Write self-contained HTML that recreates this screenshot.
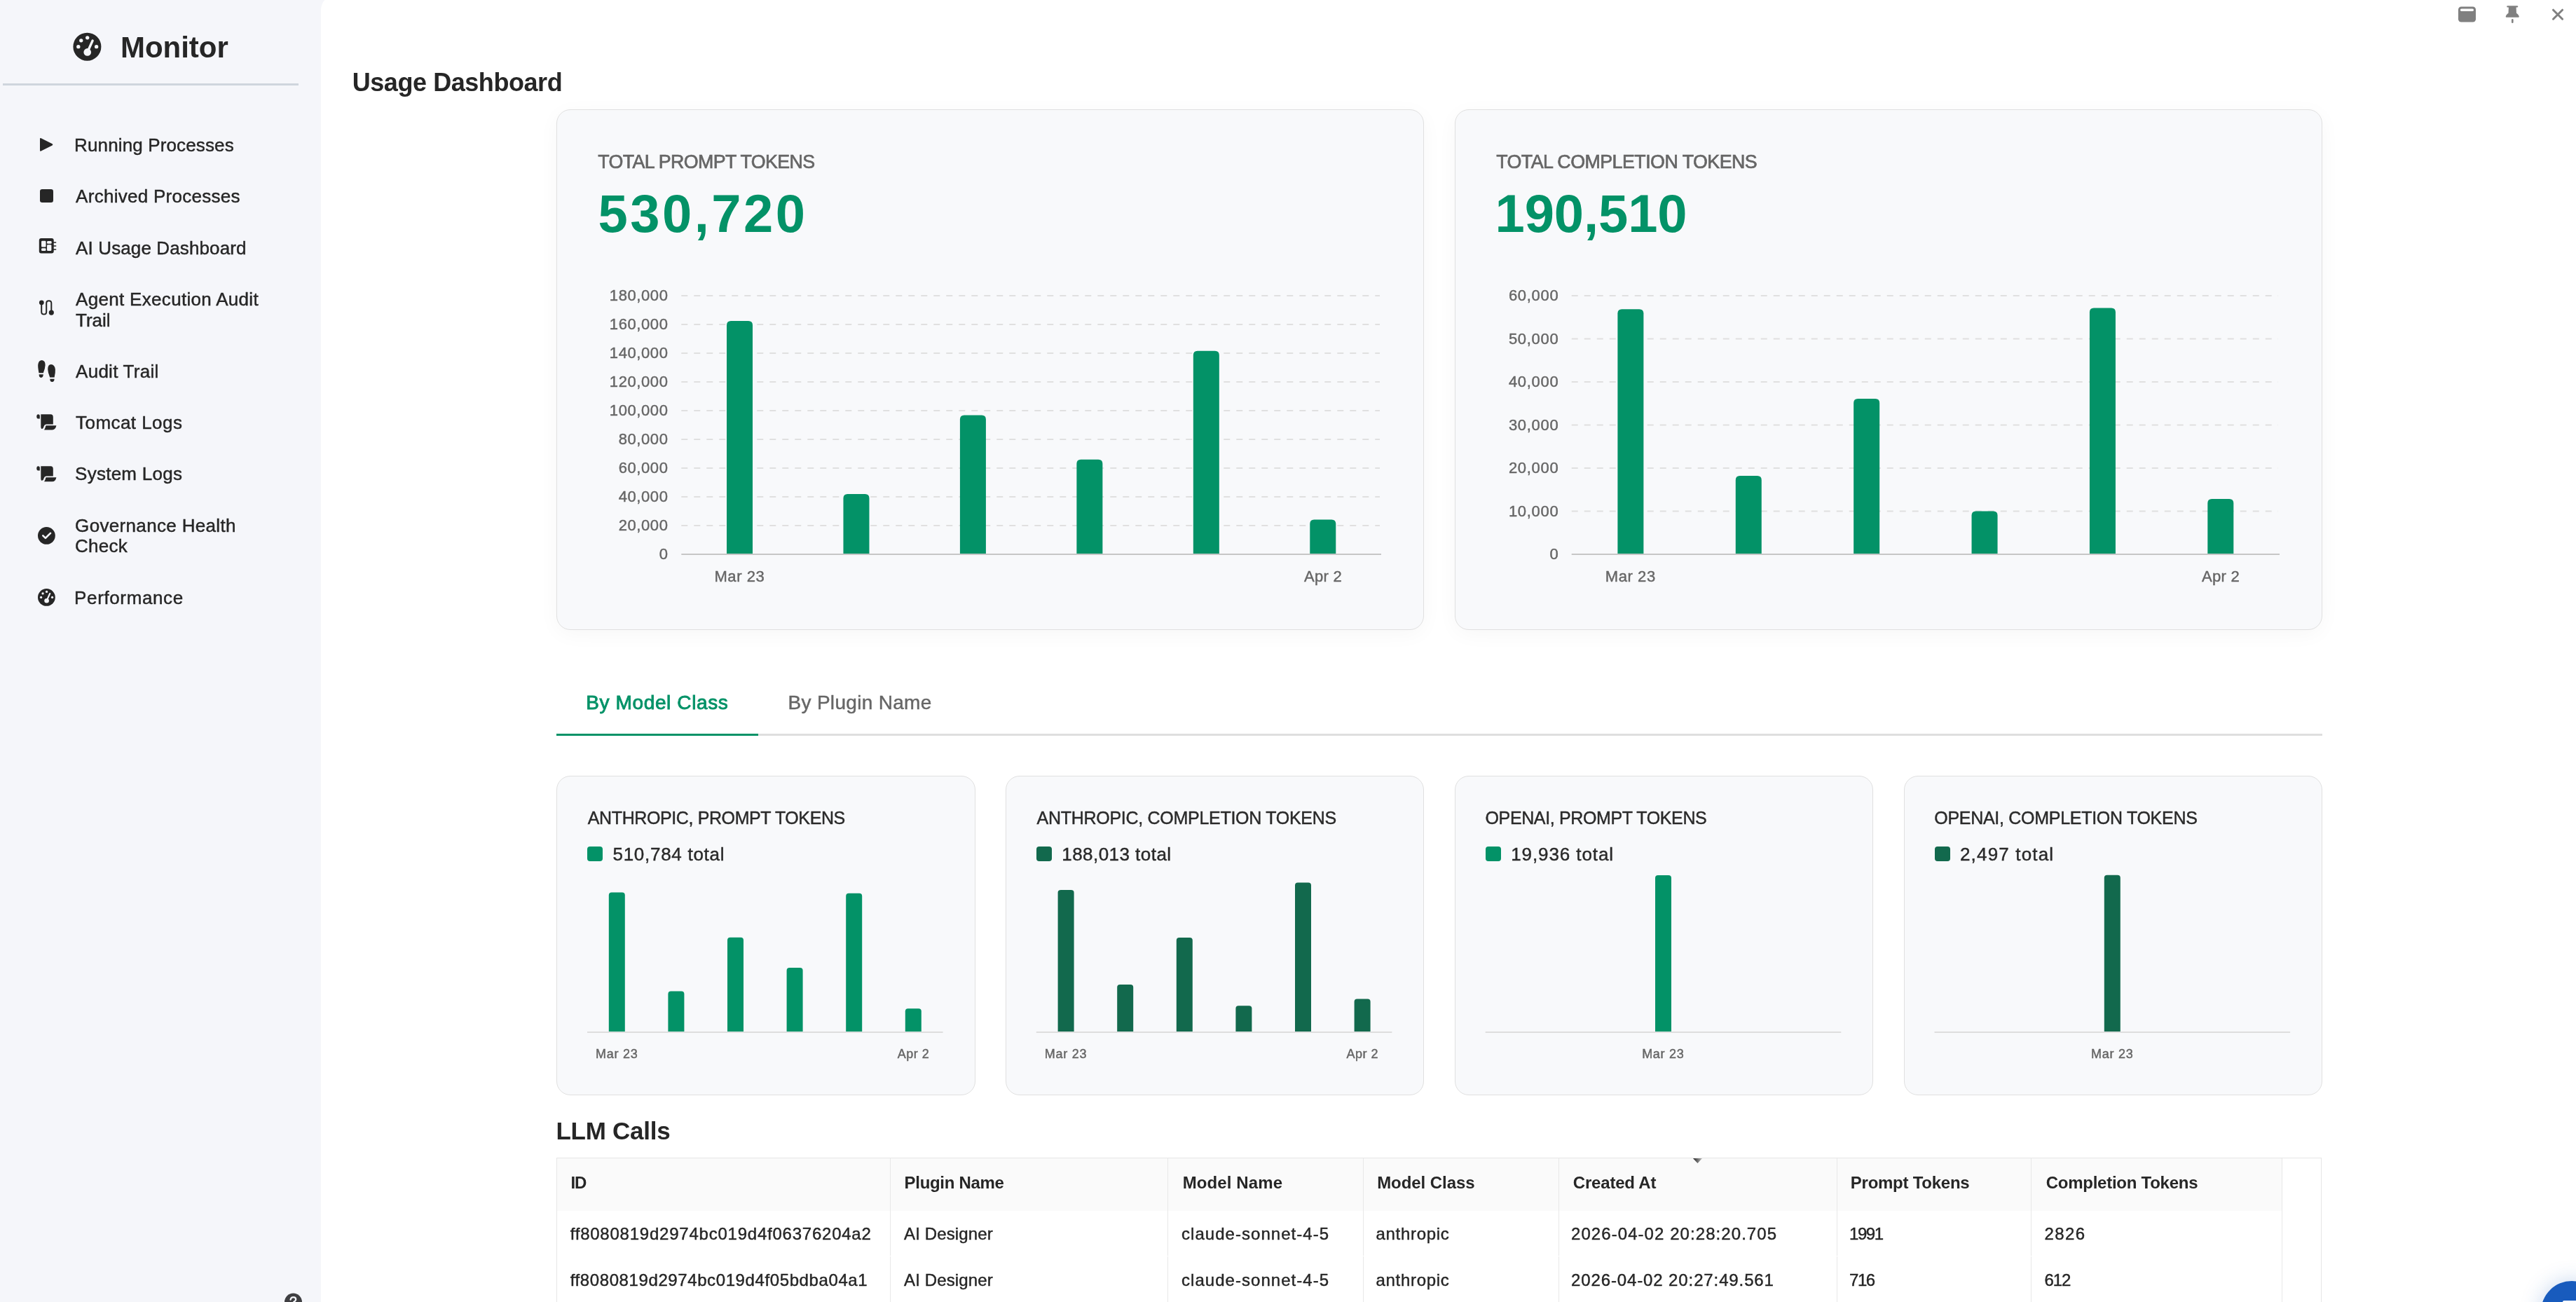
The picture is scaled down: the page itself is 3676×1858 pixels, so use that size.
<!DOCTYPE html>
<html><head><meta charset="utf-8"><title>Usage Dashboard</title>
<style>
html,body{margin:0;padding:0;}
body{width:3676px;height:1858px;overflow:hidden;position:relative;background:#f5f6fa;font-family:"Liberation Sans", sans-serif;}
.t{position:absolute;white-space:nowrap;}
#tx{position:absolute;left:0;top:0;width:3676px;height:1858px;will-change:transform;pointer-events:none;}
</style></head><body>
<div style="position:absolute;left:458px;top:-7px;width:3218px;height:1865px;background:#ffffff;border-top-left-radius:21px;"></div><svg style="position:absolute;left:0;top:0" width="458" height="1858" viewBox="0 0 458 1858"><circle cx="124.4" cy="66.7" r="20" fill="#262626"/><circle cx="111.82" cy="66.70" r="2.66" fill="#f5f6fa"/><circle cx="115.77" cy="57.83" r="2.66" fill="#f5f6fa"/><circle cx="124.72" cy="53.80" r="2.66" fill="#f5f6fa"/><circle cx="137.63" cy="66.70" r="2.66" fill="#f5f6fa"/><line x1="124.72" y1="74.44" x2="132.14" y2="57.99" stroke="#f5f6fa" stroke-width="3.39" stroke-linecap="round"/><circle cx="124.72" cy="74.44" r="5.32" fill="#f5f6fa"/><path d="M58.6,197.2 L74.6,205.2 Q76.3,206.3 74.6,207.4 L58.6,215.6 Q57,216.4 57,214.6 L57,198.2 Q57,196.4 58.6,197.2 Z" fill="#262626"/><rect x="57" y="270" width="19" height="19" rx="3.2" fill="#262626"/><rect x="55.8" y="340.1" width="20.9" height="21.5" rx="3" fill="#262626"/><rect x="59.06" y="343.8" width="6.44" height="8.80" rx="1.3" fill="#f5f6fa"/><rect x="59.06" y="354.3" width="6.44" height="3.80" rx="1.3" fill="#f5f6fa"/><rect x="67.05" y="344.1" width="6.61" height="3.70" rx="1.3" fill="#f5f6fa"/><rect x="67.05" y="349.3" width="6.35" height="8.80" rx="1.3" fill="#f5f6fa"/><line x1="76" y1="346" x2="79.6" y2="346" stroke="#262626" stroke-width="1.5" stroke-linecap="round"/><line x1="76" y1="351" x2="79.6" y2="351" stroke="#262626" stroke-width="1.5" stroke-linecap="round"/><line x1="76" y1="356" x2="79.6" y2="356" stroke="#262626" stroke-width="1.5" stroke-linecap="round"/><path d="M59.2,432 L59.2,445 Q59.2,448.6 62.7,448.6 Q66.2,448.6 66.2,445 L66.2,432.6 Q66.2,429.2 69.7,429.2 Q73.3,429.2 73.3,432.6 L73.3,446" fill="none" stroke="#262626" stroke-width="2"/><circle cx="59.3" cy="431.8" r="3.4" fill="#262626"/><circle cx="73.3" cy="446.1" r="3.6" fill="#262626"/><path d="M55.5,532.3 Q53.8,524 54.3,520 Q55.2,514 59.8,514 Q64.7,514.5 64.6,521 Q64.4,526 61.8,532.3 Z" fill="#262626"/><path d="M55.6,534.3 L61.8,534.3 Q61.6,538.9 58.6,538.9 Q55.6,538.9 55.6,534.3 Z" fill="#262626"/><path d="M71.2,538.6 Q68.4,532 68.2,527 Q68.3,520.1 72.8,520.1 Q78,520.4 78.9,527 Q79.2,532 77.6,538.6 Z" fill="#262626"/><path d="M71.3,540.7 L77.6,540.7 Q77.4,545 74.4,545 Q71.3,545 71.3,540.7 Z" fill="#262626"/><path d="M52.3,594.3  Q52.3,591.3 54.5,591.3 Q56.8,591.3 56.8,593.3 L56.8,597.5999999999999 L54.3,597.5999999999999 Q52.3,597.5999999999999 52.3,594.3 Z" fill="#262626"/><path d="M58.3,591.3 L72.3,591.3 Q75.8,591.3 75.8,595.3 L75.8,605.5999999999999 L66,605.5999999999999 Q63.5,605.5999999999999 62.7,608.3 Q61.8,611.9 59.8,611.9 Q58.3,611.9 58.3,608.8 Z" fill="#262626"/><path d="M65.5,607.3 L80.4,607.3 Q79.3,613.4 74.5,613.4 L63,613.4 Q64.5,611.3 65.5,607.3 Z" fill="#262626"/><path d="M52.3,668.1999999999999  Q52.3,665.1999999999999 54.5,665.1999999999999 Q56.8,665.1999999999999 56.8,667.1999999999999 L56.8,671.4999999999999 L54.3,671.4999999999999 Q52.3,671.4999999999999 52.3,668.1999999999999 Z" fill="#262626"/><path d="M58.3,665.1999999999999 L72.3,665.1999999999999 Q75.8,665.1999999999999 75.8,669.1999999999999 L75.8,679.4999999999999 L66,679.4999999999999 Q63.5,679.4999999999999 62.7,682.1999999999999 Q61.8,685.8 59.8,685.8 Q58.3,685.8 58.3,682.6999999999999 Z" fill="#262626"/><path d="M65.5,681.1999999999999 L80.4,681.1999999999999 Q79.3,687.3 74.5,687.3 L63,687.3 Q64.5,685.1999999999999 65.5,681.1999999999999 Z" fill="#262626"/><circle cx="66.4" cy="764.4" r="12.4" fill="#262626"/><path d="M61.3,764.3 L64.9,767.9 L72,760.8" fill="none" stroke="#f5f6fa" stroke-width="2.6" stroke-linecap="round" stroke-linejoin="round"/><circle cx="66.4" cy="852.4" r="12.4" fill="#262626"/><circle cx="58.60" cy="852.40" r="1.65" fill="#f5f6fa"/><circle cx="61.05" cy="846.90" r="1.65" fill="#f5f6fa"/><circle cx="66.60" cy="844.40" r="1.65" fill="#f5f6fa"/><circle cx="74.60" cy="852.40" r="1.65" fill="#f5f6fa"/><line x1="66.60" y1="857.20" x2="71.20" y2="847.00" stroke="#f5f6fa" stroke-width="2.10" stroke-linecap="round"/><circle cx="66.60" cy="857.20" r="3.30" fill="#f5f6fa"/><circle cx="418.5" cy="1858" r="12.5" fill="#3f3f42"/><path d="M414.6,1854.6 Q415.3,1851.2 418.6,1851.2 Q422.2,1851.2 422.2,1854.3 Q422.2,1856.2 420.2,1857.2 Q418.6,1858 418.6,1859.5" fill="none" stroke="#f5f6fa" stroke-width="2.3" stroke-linecap="round"/></svg><div style="position:absolute;left:4px;top:119px;width:422px;height:3px;background:#cfd5dd;"></div><svg style="position:absolute;left:0;top:0" width="3676" height="60" viewBox="0 0 3676 60"><rect x="3508" y="9.6" width="25" height="22" rx="4.2" fill="#808080"/><rect x="3510.9" y="12.6" width="19.1" height="3.5" rx="1.75" fill="#ffffff"/><path d="M3578.5,8.2 L3592,8.2 Q3593.3,8.2 3593.3,9.5 Q3593.3,10.6 3592,10.6 L3590.6,10.6 L3591,18.8 Q3594.8,21.5 3594.8,24 Q3594.8,24.8 3593.8,24.8 L3576.8,24.8 Q3575.7,24.8 3575.7,24 Q3575.7,21.5 3579.5,18.8 L3579.9,10.6 L3578.5,10.6 Q3577.2,10.6 3577.2,9.5 Q3577.2,8.2 3578.5,8.2 Z" fill="#808080"/><rect x="3584" y="27" width="2.6" height="6" rx="1.3" fill="#808080"/><path d="M3643.5,14.2 L3656.6,27.2 M3656.6,14.2 L3643.5,27.2" stroke="#808080" stroke-width="3" stroke-linecap="round"/></svg><div style="position:absolute;left:794px;top:156px;width:1238px;height:743px;background:#f8f9fb;border:1px solid #e0e0e0;border-radius:20px;box-sizing:border-box;box-shadow:0 6px 30px rgba(0,0,0,0.035);"></div><svg style="position:absolute;left:0;top:0" width="3676" height="900" viewBox="0 0 3676 900"><line x1="972.3" y1="422.00" x2="1969" y2="422.00" stroke="#e0e0e0" stroke-width="2" stroke-dasharray="9 9"/><line x1="972.3" y1="463.00" x2="1969" y2="463.00" stroke="#e0e0e0" stroke-width="2" stroke-dasharray="9 9"/><line x1="972.3" y1="504.00" x2="1969" y2="504.00" stroke="#e0e0e0" stroke-width="2" stroke-dasharray="9 9"/><line x1="972.3" y1="545.00" x2="1969" y2="545.00" stroke="#e0e0e0" stroke-width="2" stroke-dasharray="9 9"/><line x1="972.3" y1="586.00" x2="1969" y2="586.00" stroke="#e0e0e0" stroke-width="2" stroke-dasharray="9 9"/><line x1="972.3" y1="627.00" x2="1969" y2="627.00" stroke="#e0e0e0" stroke-width="2" stroke-dasharray="9 9"/><line x1="972.3" y1="668.00" x2="1969" y2="668.00" stroke="#e0e0e0" stroke-width="2" stroke-dasharray="9 9"/><line x1="972.3" y1="709.00" x2="1969" y2="709.00" stroke="#e0e0e0" stroke-width="2" stroke-dasharray="9 9"/><line x1="972.3" y1="750.00" x2="1969" y2="750.00" stroke="#e0e0e0" stroke-width="2" stroke-dasharray="9 9"/><line x1="972.3" y1="791" x2="1971" y2="791" stroke="#c6c6c6" stroke-width="2"/><path d="M1037.02,790 L1037.02,464.00 Q1037.02,458.00 1043.02,458.00 L1068.02,458.00 Q1074.02,458.00 1074.02,464.00 L1074.02,790 Z" fill="#039267"/><path d="M1203.47,790 L1203.47,711.00 Q1203.47,705.00 1209.47,705.00 L1234.47,705.00 Q1240.47,705.00 1240.47,711.00 L1240.47,790 Z" fill="#039267"/><path d="M1369.92,790 L1369.92,598.50 Q1369.92,592.50 1375.92,592.50 L1400.92,592.50 Q1406.92,592.50 1406.92,598.50 L1406.92,790 Z" fill="#039267"/><path d="M1536.38,790 L1536.38,661.80 Q1536.38,655.80 1542.38,655.80 L1567.38,655.80 Q1573.38,655.80 1573.38,661.80 L1573.38,790 Z" fill="#039267"/><path d="M1702.83,790 L1702.83,506.70 Q1702.83,500.70 1708.83,500.70 L1733.83,500.70 Q1739.83,500.70 1739.83,506.70 L1739.83,790 Z" fill="#039267"/><path d="M1869.28,790 L1869.28,747.40 Q1869.28,741.40 1875.28,741.40 L1900.28,741.40 Q1906.28,741.40 1906.28,747.40 L1906.28,790 Z" fill="#039267"/></svg><div style="position:absolute;left:2076px;top:156px;width:1238px;height:743px;background:#f8f9fb;border:1px solid #e0e0e0;border-radius:20px;box-sizing:border-box;box-shadow:0 6px 30px rgba(0,0,0,0.035);"></div><svg style="position:absolute;left:0;top:0" width="3676" height="900" viewBox="0 0 3676 900"><line x1="2242.7" y1="422.00" x2="3251" y2="422.00" stroke="#e0e0e0" stroke-width="2" stroke-dasharray="9 9"/><line x1="2242.7" y1="483.50" x2="3251" y2="483.50" stroke="#e0e0e0" stroke-width="2" stroke-dasharray="9 9"/><line x1="2242.7" y1="545.00" x2="3251" y2="545.00" stroke="#e0e0e0" stroke-width="2" stroke-dasharray="9 9"/><line x1="2242.7" y1="606.50" x2="3251" y2="606.50" stroke="#e0e0e0" stroke-width="2" stroke-dasharray="9 9"/><line x1="2242.7" y1="668.00" x2="3251" y2="668.00" stroke="#e0e0e0" stroke-width="2" stroke-dasharray="9 9"/><line x1="2242.7" y1="729.50" x2="3251" y2="729.50" stroke="#e0e0e0" stroke-width="2" stroke-dasharray="9 9"/><line x1="2242.7" y1="791" x2="3253" y2="791" stroke="#c6c6c6" stroke-width="2"/><path d="M2308.39,790 L2308.39,447.30 Q2308.39,441.30 2314.39,441.30 L2339.39,441.30 Q2345.39,441.30 2345.39,447.30 L2345.39,790 Z" fill="#039267"/><path d="M2476.77,790 L2476.77,685.00 Q2476.77,679.00 2482.77,679.00 L2507.77,679.00 Q2513.77,679.00 2513.77,685.00 L2513.77,790 Z" fill="#039267"/><path d="M2645.16,790 L2645.16,574.90 Q2645.16,568.90 2651.16,568.90 L2676.16,568.90 Q2682.16,568.90 2682.16,574.90 L2682.16,790 Z" fill="#039267"/><path d="M2813.54,790 L2813.54,735.40 Q2813.54,729.40 2819.54,729.40 L2844.54,729.40 Q2850.54,729.40 2850.54,735.40 L2850.54,790 Z" fill="#039267"/><path d="M2981.93,790 L2981.93,445.50 Q2981.93,439.50 2987.93,439.50 L3012.93,439.50 Q3018.93,439.50 3018.93,445.50 L3018.93,790 Z" fill="#039267"/><path d="M3150.31,790 L3150.31,718.00 Q3150.31,712.00 3156.31,712.00 L3181.31,712.00 Q3187.31,712.00 3187.31,718.00 L3187.31,790 Z" fill="#039267"/></svg><div style="position:absolute;left:794px;top:1047px;width:2520px;height:3px;background:#dedede;"></div><div style="position:absolute;left:794px;top:1047px;width:288px;height:3px;background:#039267;"></div><div style="position:absolute;left:794px;top:1107px;width:597.5px;height:456px;background:#f8f9fb;border:1px solid #e0e0e0;border-radius:20px;box-sizing:border-box;"></div><div style="position:absolute;left:838px;top:1208px;width:22px;height:21px;background:#039267;border-radius:4px;"></div><svg style="position:absolute;left:0;top:0" width="3676" height="1600" viewBox="0 0 3676 1600"><line x1="838" y1="1473" x2="1345.6" y2="1473" stroke="#dedede" stroke-width="2"/><path d="M868.80,1472 L868.80,1277.50 Q868.80,1273.50 872.80,1273.50 L887.80,1273.50 Q891.80,1273.50 891.80,1277.50 L891.80,1472 Z" fill="#039267"/><path d="M953.40,1472 L953.40,1418.50 Q953.40,1414.50 957.40,1414.50 L972.40,1414.50 Q976.40,1414.50 976.40,1418.50 L976.40,1472 Z" fill="#039267"/><path d="M1038.00,1472 L1038.00,1341.70 Q1038.00,1337.70 1042.00,1337.70 L1057.00,1337.70 Q1061.00,1337.70 1061.00,1341.70 L1061.00,1472 Z" fill="#039267"/><path d="M1122.60,1472 L1122.60,1385.00 Q1122.60,1381.00 1126.60,1381.00 L1141.60,1381.00 Q1145.60,1381.00 1145.60,1385.00 L1145.60,1472 Z" fill="#039267"/><path d="M1207.20,1472 L1207.20,1278.70 Q1207.20,1274.70 1211.20,1274.70 L1226.20,1274.70 Q1230.20,1274.70 1230.20,1278.70 L1230.20,1472 Z" fill="#039267"/><path d="M1291.80,1472 L1291.80,1443.30 Q1291.80,1439.30 1295.80,1439.30 L1310.80,1439.30 Q1314.80,1439.30 1314.80,1443.30 L1314.80,1472 Z" fill="#039267"/></svg><div style="position:absolute;left:1434.8px;top:1107px;width:597.5px;height:456px;background:#f8f9fb;border:1px solid #e0e0e0;border-radius:20px;box-sizing:border-box;"></div><div style="position:absolute;left:1478.8px;top:1208px;width:22px;height:21px;background:#12694d;border-radius:4px;"></div><svg style="position:absolute;left:0;top:0" width="3676" height="1600" viewBox="0 0 3676 1600"><line x1="1478.8" y1="1473" x2="1986.4" y2="1473" stroke="#dedede" stroke-width="2"/><path d="M1509.60,1472 L1509.60,1273.90 Q1509.60,1269.90 1513.60,1269.90 L1528.60,1269.90 Q1532.60,1269.90 1532.60,1273.90 L1532.60,1472 Z" fill="#12694d"/><path d="M1594.20,1472 L1594.20,1409.00 Q1594.20,1405.00 1598.20,1405.00 L1613.20,1405.00 Q1617.20,1405.00 1617.20,1409.00 L1617.20,1472 Z" fill="#12694d"/><path d="M1678.80,1472 L1678.80,1342.00 Q1678.80,1338.00 1682.80,1338.00 L1697.80,1338.00 Q1701.80,1338.00 1701.80,1342.00 L1701.80,1472 Z" fill="#12694d"/><path d="M1763.40,1472 L1763.40,1439.30 Q1763.40,1435.30 1767.40,1435.30 L1782.40,1435.30 Q1786.40,1435.30 1786.40,1439.30 L1786.40,1472 Z" fill="#12694d"/><path d="M1848.00,1472 L1848.00,1263.40 Q1848.00,1259.40 1852.00,1259.40 L1867.00,1259.40 Q1871.00,1259.40 1871.00,1263.40 L1871.00,1472 Z" fill="#12694d"/><path d="M1932.60,1472 L1932.60,1429.40 Q1932.60,1425.40 1936.60,1425.40 L1951.60,1425.40 Q1955.60,1425.40 1955.60,1429.40 L1955.60,1472 Z" fill="#12694d"/></svg><div style="position:absolute;left:2075.7px;top:1107px;width:597.5px;height:456px;background:#f8f9fb;border:1px solid #e0e0e0;border-radius:20px;box-sizing:border-box;"></div><div style="position:absolute;left:2119.7px;top:1208px;width:22px;height:21px;background:#039267;border-radius:4px;"></div><svg style="position:absolute;left:0;top:0" width="3676" height="1600" viewBox="0 0 3676 1600"><line x1="2119.7" y1="1473" x2="2627.2999999999997" y2="1473" stroke="#dedede" stroke-width="2"/><path d="M2362.00,1472 L2362.00,1253.00 Q2362.00,1249.00 2366.00,1249.00 L2381.00,1249.00 Q2385.00,1249.00 2385.00,1253.00 L2385.00,1472 Z" fill="#039267"/></svg><div style="position:absolute;left:2716.5px;top:1107px;width:597.5px;height:456px;background:#f8f9fb;border:1px solid #e0e0e0;border-radius:20px;box-sizing:border-box;"></div><div style="position:absolute;left:2760.5px;top:1208px;width:22px;height:21px;background:#12694d;border-radius:4px;"></div><svg style="position:absolute;left:0;top:0" width="3676" height="1600" viewBox="0 0 3676 1600"><line x1="2760.5" y1="1473" x2="3268.1" y2="1473" stroke="#dedede" stroke-width="2"/><path d="M3002.80,1472 L3002.80,1252.80 Q3002.80,1248.80 3006.80,1248.80 L3021.80,1248.80 Q3025.80,1248.80 3025.80,1252.80 L3025.80,1472 Z" fill="#12694d"/></svg><div style="position:absolute;left:794px;top:1652px;width:2519px;height:216px;border:1px solid #e6e6e6;box-sizing:border-box;background:#fff;"></div><div style="position:absolute;left:795px;top:1653px;width:2461px;height:75px;background:#fafafa;"></div><div style="position:absolute;left:1269.7px;top:1653px;width:1px;height:205px;background:#e8e8e8;"></div><div style="position:absolute;left:1666.4px;top:1653px;width:1px;height:205px;background:#e8e8e8;"></div><div style="position:absolute;left:1944.8px;top:1653px;width:1px;height:205px;background:#e8e8e8;"></div><div style="position:absolute;left:2224.0px;top:1653px;width:1px;height:205px;background:#e8e8e8;"></div><div style="position:absolute;left:2620.9px;top:1653px;width:1px;height:205px;background:#e8e8e8;"></div><div style="position:absolute;left:2898.3px;top:1653px;width:1px;height:205px;background:#e8e8e8;"></div><div style="position:absolute;left:3255.8px;top:1653px;width:1px;height:205px;background:#e8e8e8;"></div><div style="position:absolute;left:795px;top:1792px;width:2461px;height:1px;background:#ffffff;"></div><svg style="position:absolute;left:2410px;top:1650px" width="25" height="14"><defs><linearGradient id="tg" x1="0" x2="1"><stop offset="0" stop-color="#222"/><stop offset="1" stop-color="#bbb"/></linearGradient></defs><path d="M6,3 L19,3 L12.5,10 Z" fill="url(#tg)"/></svg><div style="position:absolute;left:3626px;top:1828px;width:88px;height:88px;border-radius:50%;background:#185bbd;box-shadow:0 0 30px rgba(24,91,189,0.25);"></div><div style="position:absolute;left:3657px;top:1856px;width:30px;height:4px;background:#fff;border-radius:2px;"></div>
<div id="tx"><div class="t" style="left:172.00px;top:41.55px;font-size:42px;line-height:52px;color:#262626;font-weight:bold;letter-spacing:-0.035px;">Monitor</div><div class="t" style="left:106.10px;top:191.39px;font-size:26px;line-height:32px;color:#262626;-webkit-text-stroke:0.45px #262626;letter-spacing:0.134px;">Running Processes</div><div class="t" style="left:108.10px;top:263.99px;font-size:26px;line-height:32px;color:#262626;-webkit-text-stroke:0.45px #262626;letter-spacing:0.279px;">Archived Processes</div><div class="t" style="left:108.10px;top:337.99px;font-size:26px;line-height:32px;color:#262626;-webkit-text-stroke:0.45px #262626;letter-spacing:0.117px;">AI Usage Dashboard</div><div class="t" style="left:108.10px;top:410.99px;font-size:26px;line-height:32px;color:#262626;-webkit-text-stroke:0.45px #262626;letter-spacing:0.309px;">Agent Execution Audit</div><div class="t" style="left:108.10px;top:440.99px;font-size:26px;line-height:32px;color:#262626;-webkit-text-stroke:0.45px #262626;letter-spacing:-0.028px;">Trail</div><div class="t" style="left:108.10px;top:513.99px;font-size:26px;line-height:32px;color:#262626;-webkit-text-stroke:0.45px #262626;letter-spacing:0.250px;">Audit Trail</div><div class="t" style="left:108.10px;top:586.59px;font-size:26px;line-height:32px;color:#262626;-webkit-text-stroke:0.45px #262626;letter-spacing:0.439px;">Tomcat Logs</div><div class="t" style="left:107.10px;top:660.49px;font-size:26px;line-height:32px;color:#262626;-webkit-text-stroke:0.45px #262626;letter-spacing:0.251px;">System Logs</div><div class="t" style="left:107.10px;top:733.59px;font-size:26px;line-height:32px;color:#262626;-webkit-text-stroke:0.45px #262626;letter-spacing:0.334px;">Governance Health</div><div class="t" style="left:107.10px;top:763.49px;font-size:26px;line-height:32px;color:#262626;-webkit-text-stroke:0.45px #262626;letter-spacing:0.251px;">Check</div><div class="t" style="left:106.10px;top:837.39px;font-size:26px;line-height:32px;color:#262626;-webkit-text-stroke:0.45px #262626;letter-spacing:0.622px;">Performance</div><div class="t" style="left:502.70px;top:95.03px;font-size:36px;line-height:45px;color:#262626;font-weight:bold;letter-spacing:-0.436px;">Usage Dashboard</div><div class="t" style="left:853.20px;top:213.71px;font-size:26.8px;line-height:34px;color:#666666;letter-spacing:-0.618px;-webkit-text-stroke:0.7px #666666;">TOTAL PROMPT TOKENS</div><div class="t" style="left:853.50px;top:256.77px;font-size:76px;line-height:95px;color:#039267;font-weight:bold;letter-spacing:3.458px;">530,720</div><div class="t" style="left:869.81px;top:408.18px;font-size:22px;line-height:28px;color:#666666;-webkit-text-stroke:0.45px #666666;letter-spacing:0.600px;">180,000</div><div class="t" style="left:869.81px;top:449.18px;font-size:22px;line-height:28px;color:#666666;-webkit-text-stroke:0.45px #666666;letter-spacing:0.600px;">160,000</div><div class="t" style="left:869.81px;top:490.18px;font-size:22px;line-height:28px;color:#666666;-webkit-text-stroke:0.45px #666666;letter-spacing:0.600px;">140,000</div><div class="t" style="left:869.81px;top:531.18px;font-size:22px;line-height:28px;color:#666666;-webkit-text-stroke:0.45px #666666;letter-spacing:0.600px;">120,000</div><div class="t" style="left:869.81px;top:572.18px;font-size:22px;line-height:28px;color:#666666;-webkit-text-stroke:0.45px #666666;letter-spacing:0.600px;">100,000</div><div class="t" style="left:882.65px;top:613.18px;font-size:22px;line-height:28px;color:#666666;-webkit-text-stroke:0.45px #666666;letter-spacing:0.600px;">80,000</div><div class="t" style="left:882.65px;top:654.18px;font-size:22px;line-height:28px;color:#666666;-webkit-text-stroke:0.45px #666666;letter-spacing:0.600px;">60,000</div><div class="t" style="left:882.65px;top:695.18px;font-size:22px;line-height:28px;color:#666666;-webkit-text-stroke:0.45px #666666;letter-spacing:0.600px;">40,000</div><div class="t" style="left:882.65px;top:736.18px;font-size:22px;line-height:28px;color:#666666;-webkit-text-stroke:0.45px #666666;letter-spacing:0.600px;">20,000</div><div class="t" style="left:940.70px;top:777.18px;font-size:22px;line-height:28px;color:#666666;-webkit-text-stroke:0.45px #666666;letter-spacing:0.600px;">0</div><div class="t" style="left:1019.47px;top:809.48px;font-size:22px;line-height:28px;color:#666666;-webkit-text-stroke:0.45px #666666;letter-spacing:0.573px;">Mar 23</div><div class="t" style="left:1861.08px;top:809.48px;font-size:22px;line-height:28px;color:#666666;-webkit-text-stroke:0.45px #666666;letter-spacing:0.263px;">Apr 2</div><div class="t" style="left:2135.20px;top:213.71px;font-size:26.8px;line-height:34px;color:#666666;letter-spacing:-0.531px;-webkit-text-stroke:0.7px #666666;">TOTAL COMPLETION TOKENS</div><div class="t" style="left:2133.50px;top:256.77px;font-size:76px;line-height:95px;color:#039267;font-weight:bold;letter-spacing:-0.109px;">190,510</div><div class="t" style="left:2152.95px;top:408.18px;font-size:22px;line-height:28px;color:#666666;-webkit-text-stroke:0.45px #666666;letter-spacing:0.700px;">60,000</div><div class="t" style="left:2152.95px;top:469.68px;font-size:22px;line-height:28px;color:#666666;-webkit-text-stroke:0.45px #666666;letter-spacing:0.700px;">50,000</div><div class="t" style="left:2152.95px;top:531.18px;font-size:22px;line-height:28px;color:#666666;-webkit-text-stroke:0.45px #666666;letter-spacing:0.700px;">40,000</div><div class="t" style="left:2152.95px;top:592.68px;font-size:22px;line-height:28px;color:#666666;-webkit-text-stroke:0.45px #666666;letter-spacing:0.700px;">30,000</div><div class="t" style="left:2152.95px;top:654.18px;font-size:22px;line-height:28px;color:#666666;-webkit-text-stroke:0.45px #666666;letter-spacing:0.700px;">20,000</div><div class="t" style="left:2152.95px;top:715.68px;font-size:22px;line-height:28px;color:#666666;-webkit-text-stroke:0.45px #666666;letter-spacing:0.700px;">10,000</div><div class="t" style="left:2211.50px;top:777.18px;font-size:22px;line-height:28px;color:#666666;-webkit-text-stroke:0.45px #666666;letter-spacing:0.700px;">0</div><div class="t" style="left:2290.84px;top:809.48px;font-size:22px;line-height:28px;color:#666666;-webkit-text-stroke:0.45px #666666;letter-spacing:0.573px;">Mar 23</div><div class="t" style="left:3142.11px;top:809.48px;font-size:22px;line-height:28px;color:#666666;-webkit-text-stroke:0.45px #666666;letter-spacing:0.263px;">Apr 2</div><div class="t" style="left:836.30px;top:985.00px;font-size:28px;line-height:35px;color:#039267;letter-spacing:0.615px;-webkit-text-stroke:0.85px #039267;">By Model Class</div><div class="t" style="left:1124.50px;top:985.00px;font-size:28px;line-height:35px;color:#666666;-webkit-text-stroke:0.45px #666666;letter-spacing:0.309px;">By Plugin Name</div><div class="t" style="left:838.80px;top:1151.84px;font-size:25px;line-height:31px;color:#2a2a2a;-webkit-text-stroke:0.45px #2a2a2a;letter-spacing:-0.390px;">ANTHROPIC, PROMPT TOKENS</div><div class="t" style="left:874.50px;top:1202.99px;font-size:26px;line-height:32px;color:#2a2a2a;-webkit-text-stroke:0.45px #2a2a2a;letter-spacing:0.719px;">510,784 total</div><div class="t" style="left:849.95px;top:1492.56px;font-size:18px;line-height:22px;color:#666666;-webkit-text-stroke:0.45px #666666;letter-spacing:0.738px;">Mar 23</div><div class="t" style="left:1280.80px;top:1492.56px;font-size:18px;line-height:22px;color:#666666;-webkit-text-stroke:0.45px #666666;letter-spacing:0.497px;">Apr 2</div><div class="t" style="left:1479.60px;top:1151.84px;font-size:25px;line-height:31px;color:#2a2a2a;-webkit-text-stroke:0.45px #2a2a2a;letter-spacing:-0.286px;">ANTHROPIC, COMPLETION TOKENS</div><div class="t" style="left:1515.30px;top:1202.99px;font-size:26px;line-height:32px;color:#2a2a2a;-webkit-text-stroke:0.45px #2a2a2a;letter-spacing:0.452px;">188,013 total</div><div class="t" style="left:1490.75px;top:1492.56px;font-size:18px;line-height:22px;color:#666666;-webkit-text-stroke:0.45px #666666;letter-spacing:0.738px;">Mar 23</div><div class="t" style="left:1921.60px;top:1492.56px;font-size:18px;line-height:22px;color:#666666;-webkit-text-stroke:0.45px #666666;letter-spacing:0.497px;">Apr 2</div><div class="t" style="left:2119.50px;top:1151.84px;font-size:25px;line-height:31px;color:#2a2a2a;-webkit-text-stroke:0.45px #2a2a2a;letter-spacing:-0.371px;">OPENAI, PROMPT TOKENS</div><div class="t" style="left:2156.20px;top:1202.99px;font-size:26px;line-height:32px;color:#2a2a2a;-webkit-text-stroke:0.45px #2a2a2a;letter-spacing:0.908px;">19,936 total</div><div class="t" style="left:2343.15px;top:1492.56px;font-size:18px;line-height:22px;color:#666666;-webkit-text-stroke:0.45px #666666;letter-spacing:0.738px;">Mar 23</div><div class="t" style="left:2760.30px;top:1151.84px;font-size:25px;line-height:31px;color:#2a2a2a;-webkit-text-stroke:0.45px #2a2a2a;letter-spacing:-0.290px;">OPENAI, COMPLETION TOKENS</div><div class="t" style="left:2797.00px;top:1202.99px;font-size:26px;line-height:32px;color:#2a2a2a;-webkit-text-stroke:0.45px #2a2a2a;letter-spacing:1.165px;">2,497 total</div><div class="t" style="left:2983.95px;top:1492.56px;font-size:18px;line-height:22px;color:#666666;-webkit-text-stroke:0.45px #666666;letter-spacing:0.738px;">Mar 23</div><div class="t" style="left:793.40px;top:1591.87px;font-size:35px;line-height:44px;color:#262626;font-weight:bold;letter-spacing:-0.241px;">LLM Calls</div><div class="t" style="left:814.60px;top:1672.68px;font-size:24px;line-height:30px;color:#262626;font-weight:bold;letter-spacing:-1.168px;">ID</div><div class="t" style="left:1290.60px;top:1672.68px;font-size:24px;line-height:30px;color:#262626;font-weight:bold;letter-spacing:-0.311px;">Plugin Name</div><div class="t" style="left:1687.70px;top:1672.68px;font-size:24px;line-height:30px;color:#262626;font-weight:bold;letter-spacing:0.109px;">Model Name</div><div class="t" style="left:1965.20px;top:1672.68px;font-size:24px;line-height:30px;color:#262626;font-weight:bold;letter-spacing:-0.059px;">Model Class</div><div class="t" style="left:2244.80px;top:1672.68px;font-size:24px;line-height:30px;color:#262626;font-weight:bold;letter-spacing:-0.196px;">Created At</div><div class="t" style="left:2640.80px;top:1672.68px;font-size:24px;line-height:30px;color:#262626;font-weight:bold;letter-spacing:-0.255px;">Prompt Tokens</div><div class="t" style="left:2919.70px;top:1672.68px;font-size:24px;line-height:30px;color:#262626;font-weight:bold;letter-spacing:-0.253px;">Completion Tokens</div><div class="t" style="left:813.70px;top:1746.28px;font-size:24px;line-height:30px;color:#262626;-webkit-text-stroke:0.45px #262626;letter-spacing:0.769px;">ff8080819d2974bc019d4f06376204a2</div><div class="t" style="left:1290.00px;top:1746.28px;font-size:24px;line-height:30px;color:#262626;-webkit-text-stroke:0.45px #262626;letter-spacing:0.130px;">AI Designer</div><div class="t" style="left:1686.00px;top:1746.28px;font-size:24px;line-height:30px;color:#262626;-webkit-text-stroke:0.45px #262626;letter-spacing:1.037px;">claude-sonnet-4-5</div><div class="t" style="left:1963.40px;top:1746.28px;font-size:24px;line-height:30px;color:#262626;-webkit-text-stroke:0.45px #262626;letter-spacing:0.709px;">anthropic</div><div class="t" style="left:2242.00px;top:1746.28px;font-size:24px;line-height:30px;color:#262626;-webkit-text-stroke:0.45px #262626;letter-spacing:1.067px;">2026-04-02 20:28:20.705</div><div class="t" style="left:2639.00px;top:1746.28px;font-size:24px;line-height:30px;color:#262626;-webkit-text-stroke:0.45px #262626;letter-spacing:-1.414px;">1991</div><div class="t" style="left:2917.50px;top:1746.28px;font-size:24px;line-height:30px;color:#262626;-webkit-text-stroke:0.45px #262626;letter-spacing:1.386px;">2826</div><div class="t" style="left:813.70px;top:1811.58px;font-size:24px;line-height:30px;color:#262626;-webkit-text-stroke:0.45px #262626;letter-spacing:0.601px;">ff8080819d2974bc019d4f05bdba04a1</div><div class="t" style="left:1290.00px;top:1811.58px;font-size:24px;line-height:30px;color:#262626;-webkit-text-stroke:0.45px #262626;letter-spacing:0.130px;">AI Designer</div><div class="t" style="left:1686.00px;top:1811.58px;font-size:24px;line-height:30px;color:#262626;-webkit-text-stroke:0.45px #262626;letter-spacing:1.037px;">claude-sonnet-4-5</div><div class="t" style="left:1963.40px;top:1811.58px;font-size:24px;line-height:30px;color:#262626;-webkit-text-stroke:0.45px #262626;letter-spacing:0.709px;">anthropic</div><div class="t" style="left:2242.00px;top:1811.58px;font-size:24px;line-height:30px;color:#262626;-webkit-text-stroke:0.45px #262626;letter-spacing:0.881px;">2026-04-02 20:27:49.561</div><div class="t" style="left:2639.00px;top:1811.58px;font-size:24px;line-height:30px;color:#262626;-webkit-text-stroke:0.45px #262626;letter-spacing:-1.448px;">716</div><div class="t" style="left:2917.50px;top:1811.58px;font-size:24px;line-height:30px;color:#262626;-webkit-text-stroke:0.45px #262626;letter-spacing:-1.098px;">612</div></div>
</body></html>
